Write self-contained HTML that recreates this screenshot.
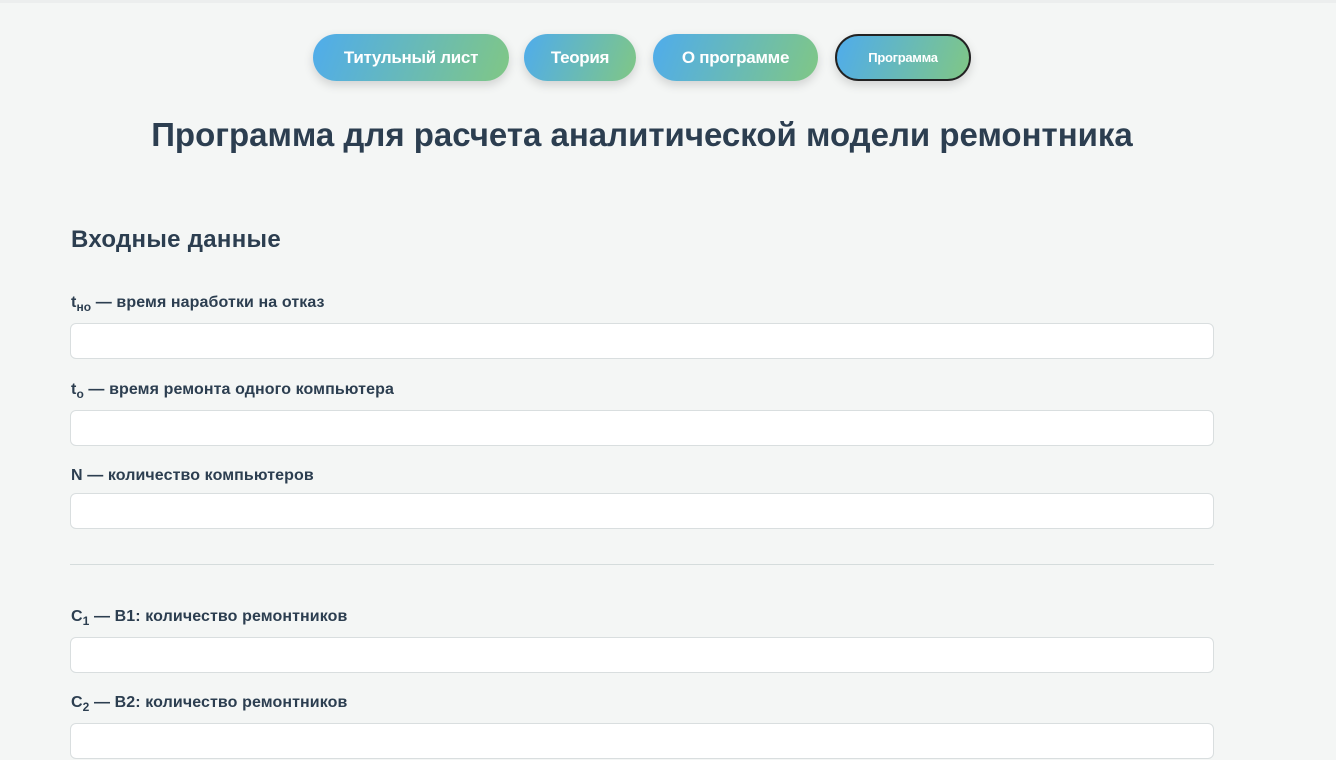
<!DOCTYPE html><html><head><meta charset="utf-8"><style>
body{margin:0;width:1336px;height:760px;overflow:hidden;background:#f4f6f5;font-family:"Liberation Sans",sans-serif;color:#2c3e50;position:relative}
.top{position:absolute;left:0;top:0;width:1336px;height:3px;background:#eceeee}
.b{position:absolute;top:34px;height:47px;border-radius:24px;background:linear-gradient(110deg,#4facec,#80c785);color:#fff;font-weight:bold;font-size:17px;display:flex;align-items:center;justify-content:center;box-shadow:0 4px 10px rgba(0,0,0,.15);box-sizing:border-box;letter-spacing:-.3px}
h1{position:absolute;left:0;width:1284px;text-align:center;top:116px;margin:0;font-size:33px;font-weight:bold}
h2{position:absolute;left:71px;top:226px;margin:0;font-size:24px;letter-spacing:.3px}
.l{position:absolute;left:71px;font-size:16px;font-weight:bold;letter-spacing:.1px}
.l sub{font-size:12px}
.i{position:absolute;left:70px;width:1144px;height:36px;box-sizing:border-box;background:#fff;border:1px solid #d9dedf;border-radius:6px}
hr{position:absolute;left:70px;top:564px;width:1144px;margin:0;border:0;border-top:1px solid #d5dcdc}
</style></head><body>
<div class="top"></div>
<div class="b" style="left:313px;width:196px">Титульный лист</div>
<div class="b" style="left:524px;width:112px">Теория</div>
<div class="b" style="left:653px;width:165px">О программе</div>
<div class="b" style="left:835px;width:136px;border:2px solid #222;font-size:13px">Программа</div>
<h1>Программа для расчета аналитической модели ремонтника</h1>
<h2>Входные данные</h2>
<div class="l" style="top:294px">t<sub>но</sub> — время наработки на отказ</div>
<div class="i" style="top:323px"></div>
<div class="l" style="top:381px">t<sub>о</sub> — время ремонта одного компьютера</div>
<div class="i" style="top:410px"></div>
<div class="l" style="top:467px">N — количество компьютеров</div>
<div class="i" style="top:493px"></div>
<hr>
<div class="l" style="top:608px">C<sub>1</sub> — B1: количество ремонтников</div>
<div class="i" style="top:637px"></div>
<div class="l" style="top:694px">C<sub>2</sub> — B2: количество ремонтников</div>
<div class="i" style="top:723px"></div>
</body></html>
